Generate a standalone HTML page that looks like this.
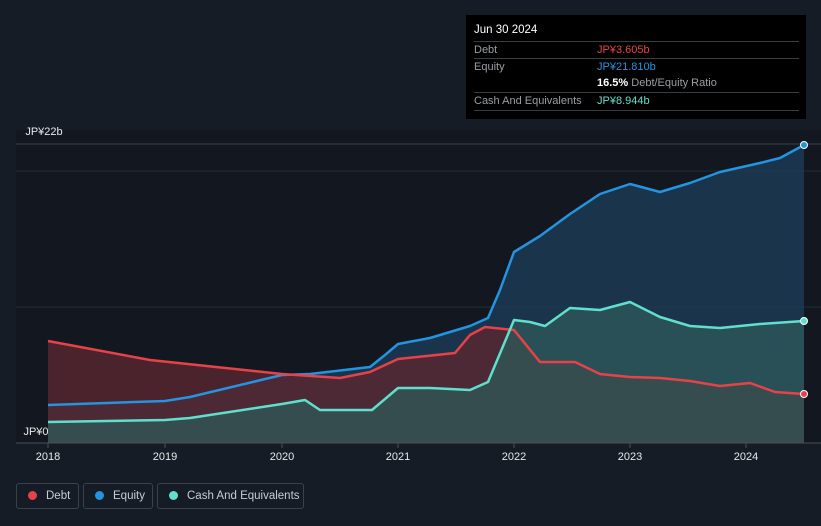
<!DOCTYPE html>
<html><head><style>
body{margin:0;width:821px;height:526px;background:#161c26;font-family:"Liberation Sans",sans-serif;overflow:hidden;position:relative}
.tt{position:absolute;left:466px;top:15px;width:340px;height:104px;background:#000;color:#fff;font-size:11px}
.tt div.r{position:absolute;left:8px;width:325px;border-top:1px solid #3a3e44;height:17px;line-height:17px}
.l{color:#9a9ea4}
.leg{position:absolute;top:483px;height:26px;border:1px solid #3b414b;border-radius:3px;color:#c9ccd1;font-size:11.5px;line-height:24px;box-sizing:border-box;white-space:nowrap;overflow:hidden}
.leg i{display:inline-block;width:9px;height:9px;border-radius:50%;margin:0 9px 0 11px;vertical-align:-1px}
</style></head><body>
<svg width="821" height="526" style="position:absolute;left:0;top:0">
<rect x="16" y="130" width="805" height="313" fill="#131820"/>
<line x1="16" y1="144" x2="821" y2="144" stroke="#3a4048"/>
<line x1="16" y1="171" x2="821" y2="171" stroke="#262c35"/>
<line x1="16" y1="307" x2="821" y2="307" stroke="#262c35"/>
<polygon fill="#1c3a55" opacity="0.85" points="48,405 165,401 190,397 282,375 310,374 370,367 385,355 398,344 430,338 470,326 488,318 500,290 514,252 540,236 570,214 600,194 630,184 660,192 690,183 720,172 760,163 780,158 804,145 804,443 48,443"/>
<polygon fill="#5a2730" opacity="0.8" points="48,341 150,360 282,374 340,378 370,372 398,359 455,353 470,335 485,327 514,330 540,362 575,362 600,374 630,377 660,378 690,381 720,386 750,383 775,392 804,394 804,443 48,443"/>
<polygon fill="#2f5a5a" opacity="0.75" points="48,422 165,420 190,418 282,404 305,400 320,410 372,410 398,388 430,388 470,390 488,382 514,320 530,322 545,326 570,308 600,310 630,302 660,317 690,326 720,328 760,324 804,321 804,443 48,443"/>
<polyline fill="none" stroke="#2394df" stroke-width="2.5" stroke-linejoin="round" points="48,405 165,401 190,397 282,375 310,374 370,367 385,355 398,344 430,338 470,326 488,318 500,290 514,252 540,236 570,214 600,194 630,184 660,192 690,183 720,172 760,163 780,158 804,145"/>
<polyline fill="none" stroke="#e5424a" stroke-width="2.5" stroke-linejoin="round" points="48,341 150,360 282,374 340,378 370,372 398,359 455,353 470,335 485,327 514,330 540,362 575,362 600,374 630,377 660,378 690,381 720,386 750,383 775,392 804,394"/>
<polyline fill="none" stroke="#5fe0cc" stroke-width="2.5" stroke-linejoin="round" points="48,422 165,420 190,418 282,404 305,400 320,410 372,410 398,388 430,388 470,390 488,382 514,320 530,322 545,326 570,308 600,310 630,302 660,317 690,326 720,328 760,324 804,321"/>
<circle cx="804" cy="145" r="3.5" fill="#2394df" stroke="#fff"/>
<circle cx="804" cy="321" r="3.5" fill="#5fe0cc" stroke="#fff"/>
<circle cx="804" cy="394" r="3.5" fill="#e5424a" stroke="#fff"/>
<line x1="16" y1="443" x2="821" y2="443" stroke="#4a5058"/>
<g stroke="#4a5058"><line x1="48" y1="443" x2="48" y2="448"/><line x1="165" y1="443" x2="165" y2="448"/><line x1="282" y1="443" x2="282" y2="448"/><line x1="398" y1="443" x2="398" y2="448"/><line x1="514" y1="443" x2="514" y2="448"/><line x1="630" y1="443" x2="630" y2="448"/><line x1="746" y1="443" x2="746" y2="448"/></g>
<g fill="#e6e8eb" font-size="11" font-family="Liberation Sans" text-anchor="middle">
<text x="48" y="460">2018</text><text x="165" y="460">2019</text><text x="282" y="460">2020</text><text x="398" y="460">2021</text><text x="514" y="460">2022</text><text x="630" y="460">2023</text><text x="746" y="460">2024</text>
<text x="44" y="135">JP¥22b</text><text x="36" y="435">JP¥0</text></g>
</svg>
<div class="tt">
<div style="position:absolute;left:8px;top:9px;font-size:11.5px">Jun 30 2024</div>
<div class="r" style="top:26px"><span class="l">Debt</span><span style="position:absolute;left:123px;color:#e5424a">JP¥3.605b</span></div>
<div class="r" style="top:43px"><span class="l">Equity</span><span style="position:absolute;left:123px;color:#2394df">JP¥21.810b</span></div>
<div class="r" style="top:60px;border:0"><span style="position:absolute;left:123px"><b>16.5%</b> <span class="l">Debt/Equity Ratio</span></span></div>
<div class="r" style="top:77px"><span class="l">Cash And Equivalents</span><span style="position:absolute;left:123px;color:#5fe0cc">JP¥8.944b</span></div>
<div class="r" style="top:95px;height:0"></div>
</div>
<div class="leg" style="left:16px;width:63px"><i style="background:#e5424a"></i>Debt</div>
<div class="leg" style="left:83px;width:70px"><i style="background:#2394df"></i>Equity</div>
<div class="leg" style="left:157px;width:147px"><i style="background:#5fe0cc"></i>Cash And Equivalents</div>
</body></html>
